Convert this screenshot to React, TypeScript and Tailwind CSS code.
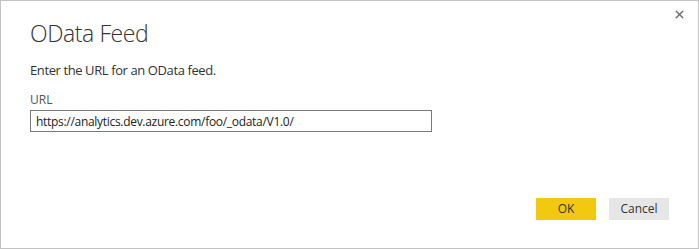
import { X } from "lucide-react";

export default function App() {
  return (
    <div className="flex h-[249px] w-[699px] flex-col border border-[#c2c2c2] bg-white font-['Open_Sans',sans-serif] text-[#333]">
      <div className="flex justify-end pr-[12px] pt-[7px]">
        <button className="text-[#6b6b6b]" aria-label="Close">
          <X className="size-[13px]" strokeWidth={2.5} />
        </button>
      </div>
      <div className="flex flex-col px-[29px]">
        <h1 className="mt-[-2px] text-[23px] font-light leading-[28px] tracking-[-0.4px] text-[#333]">OData Feed</h1>
        <p className="mt-[14px] text-[13px] leading-[18px] tracking-[-0.4px] text-[#333]">Enter the URL for an OData feed.</p>
        <label className="mt-[13px] text-[12px] leading-[16px] text-[#555]">URL</label>
        <input
          readOnly
          value="https://analytics.dev.azure.com/foo/_odata/V1.0/"
          className="mt-[2px] h-[22px] w-[402px] border border-[#7a7a7a] px-[5px] text-[12px] tracking-[-0.3px] text-[#222] outline-none"
        />
      </div>
      <div className="mt-auto flex justify-end gap-[13px] pb-[28px] pr-[29px]">
        <button className="h-[22px] w-[60px] bg-[#f2c811] text-[12px] text-[#333]">OK</button>
        <button className="h-[22px] w-[60px] bg-[#e6e6e6] text-[12px] text-[#333]">Cancel</button>
      </div>
    </div>
  );
}
